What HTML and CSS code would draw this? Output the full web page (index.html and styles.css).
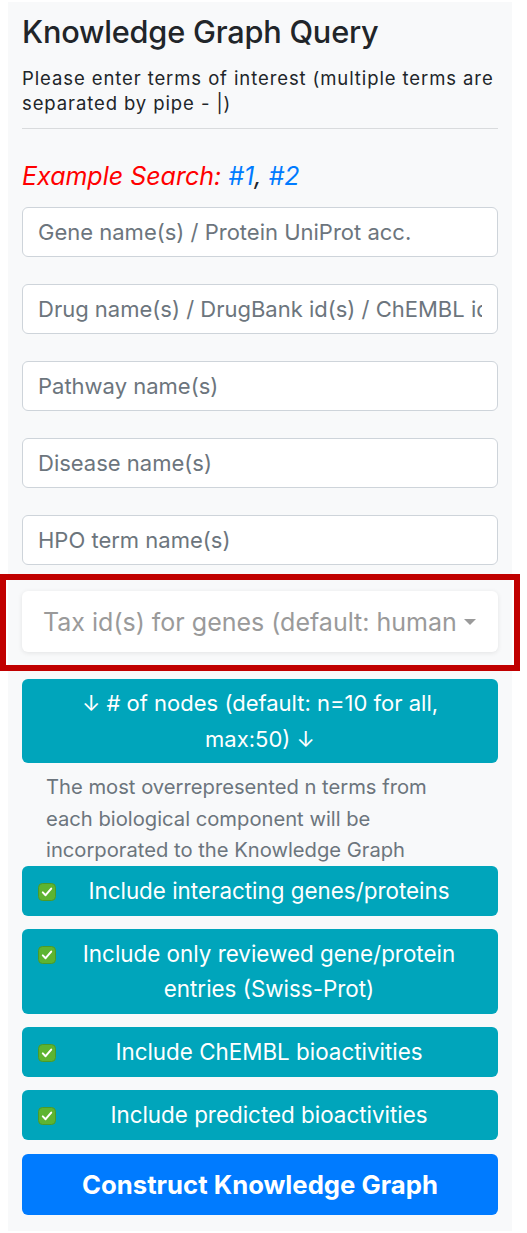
FILE: index.html
```html
<!DOCTYPE html>
<html lang="en">
<head>
<meta charset="utf-8">
<title>Knowledge Graph Query</title>
<link rel="stylesheet" href="styles.css">
</head>
<body>
<div class="panel">
  <h3 class="title">Knowledge Graph Query</h3>
  <p class="intro">Please enter terms of interest (multiple terms are separated by pipe - |)</p>
  <hr class="rule">
  <h4 class="example">Example Search: <a class="ex-link" href="#">#1</a><span class="comma">,</span> <a class="ex-link" href="#">#2</a></h4>
  <input class="field" type="text" placeholder="Gene name(s) / Protein UniProt acc.">
  <input class="field" type="text" placeholder="Drug name(s) / DrugBank id(s) / ChEMBL id(s)">
  <input class="field" type="text" placeholder="Pathway name(s)">
  <input class="field" type="text" placeholder="Disease name(s)">
  <input class="field" type="text" placeholder="HPO term name(s)">
  <div class="select-wrap">
    <div class="select">
      <span class="select-text">Tax id(s) for genes (default: human)</span>
      <span class="caret"></span>
    </div>
  </div>
  <div class="nodes-btn">↓ # of nodes (default: n=10 for all, max:50) ↓</div>
  <p class="desc">The most overrepresented n terms from each biological component will be incorporated to the Knowledge Graph</p>
  <div class="check-btn">
    <svg class="check" viewBox="0 0 18 18"><rect x="0.5" y="0.5" width="17" height="17" rx="4" fill="#5db431" stroke="#4c9a27"/><path d="M4.8 9.4 L7.6 12.2 L13.2 5.6" fill="none" stroke="#fff" stroke-width="2" stroke-linecap="round" stroke-linejoin="round"/></svg>
    <span class="check-label">Include interacting genes/proteins</span>
  </div>
  <div class="check-btn">
    <svg class="check" viewBox="0 0 18 18"><rect x="0.5" y="0.5" width="17" height="17" rx="4" fill="#5db431" stroke="#4c9a27"/><path d="M4.8 9.4 L7.6 12.2 L13.2 5.6" fill="none" stroke="#fff" stroke-width="2" stroke-linecap="round" stroke-linejoin="round"/></svg>
    <span class="check-label">Include only reviewed gene/protein entries (Swiss-Prot)</span>
  </div>
  <div class="check-btn">
    <svg class="check" viewBox="0 0 18 18"><rect x="0.5" y="0.5" width="17" height="17" rx="4" fill="#5db431" stroke="#4c9a27"/><path d="M4.8 9.4 L7.6 12.2 L13.2 5.6" fill="none" stroke="#fff" stroke-width="2" stroke-linecap="round" stroke-linejoin="round"/></svg>
    <span class="check-label">Include ChEMBL bioactivities</span>
  </div>
  <div class="check-btn">
    <svg class="check" viewBox="0 0 18 18"><rect x="0.5" y="0.5" width="17" height="17" rx="4" fill="#5db431" stroke="#4c9a27"/><path d="M4.8 9.4 L7.6 12.2 L13.2 5.6" fill="none" stroke="#fff" stroke-width="2" stroke-linecap="round" stroke-linejoin="round"/></svg>
    <span class="check-label">Include predicted bioactivities</span>
  </div>
  <div class="construct-btn">Construct Knowledge Graph</div>
</div>
</body>
</html>
```
FILE: styles.css
```css
* { box-sizing: border-box; }
html, body { margin: 0; padding: 0; background: #ffffff; }
body {
  font-family: Inter, "Noto Sans", "Liberation Sans", sans-serif;
  color: #212529;
  padding: 2px 15px 0 8px;
}
.panel {
  background: #f8f9fa;
  padding: 12px 14px 16px 14px;
  display: flex;
  flex-direction: column;
}
.title {
  margin: 0;
  font-size: 30.7px;
  font-weight: 500;
  line-height: 36px;
  color: #212529;
  letter-spacing: -0.2px;
}
.intro {
  margin: 16px 0 0 0;
  font-size: 18.5px;
  letter-spacing: 0.9px;
  line-height: 25px;
  color: #212529;
}
.rule {
  margin: 12px 0 0 0;
  border: 0;
  border-top: 1px solid #d9dbdd;
  height: 0;
}
.example {
  margin: 33px 0 0 0;
  font-size: 25px;
  font-weight: 400;
  font-style: italic;
  line-height: 29px;
  color: #ff0000;
}
.ex-link { color: #007bff; text-decoration: none; }
.comma { color: #212529; }
.field {
  display: block;
  width: 100%;
  height: 50px;
  margin: 17px 0 10px 0;
  padding: 0 15px;
  font-family: Inter, "Noto Sans", "Liberation Sans", sans-serif;
  font-size: 22px;
  color: #495057;
  background: #ffffff;
  border: 1px solid #ced4da;
  border-radius: 6px;
  outline: none;
}
.example + .field { margin-top: 16px; }
.field::placeholder { color: #6c757d; opacity: 1; }
.select-wrap {
  position: relative;
  margin-top: 16px;
}
.select-wrap::after {
  content: "";
  position: absolute;
  left: -22px;
  right: -22px;
  top: -17px;
  bottom: -19px;
  border: 6px solid #c00000;
  pointer-events: none;
}
.select {
  height: 61px;
  background: #ffffff;
  border-radius: 6px;
  box-shadow: 0 1px 5px rgba(0, 0, 0, 0.09);
  display: flex;
  align-items: center;
  padding: 0 22px 0 21px;
  gap: 8px;
}
.select-text {
  flex: 1;
  min-width: 0;
  overflow: hidden;
  white-space: nowrap;
  font-size: 25px;
  color: #9a9a9a;
}
.caret {
  width: 0;
  height: 0;
  border-left: 6px solid transparent;
  border-right: 6px solid transparent;
  border-top: 6px solid #9a9a9a;
  flex: none;
}
.nodes-btn {
  margin-top: 27px;
  background: #00a5bb;
  color: #ffffff;
  border-radius: 6px;
  text-align: center;
  font-size: 22px;
  line-height: 36px;
  padding: 6px 26px;
}
.desc {
  margin: 8px 0 0 0;
  padding: 0 24px;
  font-size: 20.2px;
  line-height: 31.5px;
  color: #6c757d;
}
.check-btn {
  margin-top: 13px;
  background: #00a5bb;
  color: #ffffff;
  border-radius: 6px;
  display: grid;
  grid-template-columns: 18px 1fr;
  column-gap: 4px;
  align-items: start;
  padding: 7px 20px 8px 16px;
  font-size: 22.4px;
  line-height: 35px;
}
.desc + .check-btn { margin-top: 0; }
.check-btn:last-of-type { padding-bottom: 9px; }
.check {
  width: 18px;
  height: 18px;
  margin-top: 10px;
  display: block;
}
.check-label { text-align: center; }
.construct-btn {
  margin-top: 14px;
  height: 61px;
  background: #007bff;
  color: #ffffff;
  border-radius: 6px;
  display: flex;
  align-items: center;
  justify-content: center;
  font-size: 25.7px;
  font-weight: 700;
}
```
